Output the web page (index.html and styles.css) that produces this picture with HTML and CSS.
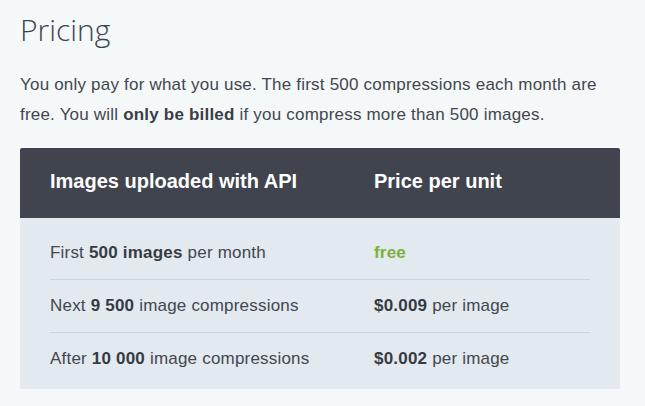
FILE: index.html
```html
<!DOCTYPE html>
<html lang="en">
<head>
<meta charset="utf-8">
<title>Pricing</title>
<link rel="stylesheet" href="styles.css">
</head>
<body>
<main class="page">
  <h2 class="title">Pricing</h2>
  <p class="intro">You only pay for what you use. The first 500 compressions each month are free. You will <strong>only be billed</strong> if you compress more than 500 images.</p>
  <div class="pricing">
    <div class="head">
      <div class="col">Images uploaded with API</div>
      <div class="col">Price per unit</div>
    </div>
    <div class="body">
      <div class="row">
        <div class="col">First <strong>500 images</strong> per month</div>
        <div class="col"><strong class="free">free</strong></div>
      </div>
      <div class="row">
        <div class="col">Next <strong>9 500</strong> image compressions</div>
        <div class="col"><strong>$0.009</strong> per image</div>
      </div>
      <div class="row">
        <div class="col">After <strong>10 000</strong> image compressions</div>
        <div class="col"><strong>$0.002</strong> per image</div>
      </div>
    </div>
  </div>
</main>
</body>
</html>
```

FILE: styles.css
```css
html, body {
  margin: 0;
  padding: 0;
  background: #f5f8f9;
}
.page {
  padding: 10px 25px 0 20px;
  font-family: "Liberation Sans", Arial, sans-serif;
  color: #3c4149;
}
.title {
  margin: 0;
  font-family: "Open Sans", sans-serif;
  font-weight: 300;
  font-size: 30px;
  line-height: 40px;
  color: #3b4550;
}
.intro {
  margin: 20px 0 0 0;
  font-size: 17px;
  line-height: 30px;
  letter-spacing: 0.2px;
  color: #42474f;
}
.intro strong {
  color: #3a3f47;
}
.pricing {
  margin-top: 18px;
  width: 600px;
  border-radius: 2px;
  overflow: hidden;
  background: #e2e9ef;
}
.head {
  display: grid;
  grid-template-columns: 324px 1fr;
  height: 70px;
  align-items: center;
  padding: 0 30px;
  background: #3f444e;
  color: #ffffff;
  font-weight: bold;
  font-size: 20px;
}
.head .col {
  padding-bottom: 4px;
}
.body {
  padding: 9px 30px 4px 30px;
}
.row {
  display: grid;
  grid-template-columns: 324px 1fr;
  height: 52px;
  align-items: center;
  font-size: 17px;
  letter-spacing: 0.2px;
  color: #42474f;
}
.row + .row {
  border-top: 1px solid #c9d5de;
}
.row strong {
  color: #363b42;
}
.row strong.free {
  color: #7bb13b;
}
```
